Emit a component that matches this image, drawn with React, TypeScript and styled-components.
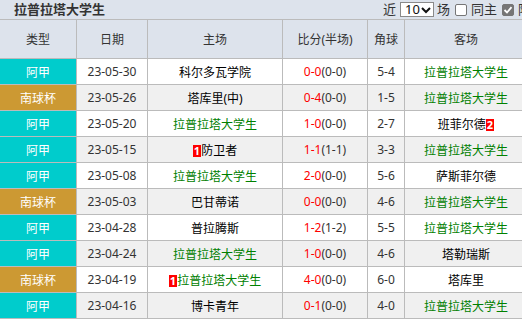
import React from "react";
import styled, { createGlobalStyle } from "styled-components";

const Global = createGlobalStyle`
  html, body { margin: 0; padding: 0; background: #ffffff; overflow: hidden; }
  body { font-family: "Noto Sans", "Noto Sans CJK SC", sans-serif; font-size: 12px; color: #333; }
`;

const Page = styled.div`
  width: 522px;
  height: 319px;
  overflow: hidden;
  background: #dde3ec;
`;

const TitleBar = styled.div`
  display: flex;
  align-items: center;
  height: 19px;
  background: #dde3ec;
  white-space: nowrap;
`;

const Title = styled.div`
  flex: 1 1 auto;
  min-width: 0;
  padding-left: 14px;
  font-size: 13px;
  font-weight: bold;
  color: #333;
  line-height: 19px;
`;

const Controls = styled.div`
  flex: 0 0 139px;
  display: flex;
  align-items: center;
  gap: 3px;
  overflow: hidden;
  font-size: 13px;
  color: #333;
  line-height: 19px;
`;

const Select = styled.div`
  flex: 0 0 auto;
  display: flex;
  align-items: center;
  justify-content: space-between;
  box-sizing: border-box;
  width: 34px;
  height: 15px;
  padding: 0 2px 0 4px;
  margin-left: 1px;
  background: #fff;
  border: 1px solid #8a8a8a;
  font-size: 13px;
  color: #111;
  line-height: 13px;
`;

const Check = styled.span<{ $on?: boolean }>`
  flex: 0 0 auto;
  display: inline-flex;
  align-items: center;
  justify-content: center;
  box-sizing: border-box;
  width: 12px;
  height: 12px;
  border-radius: 2px;
  border: 1px solid ${(p) => (p.$on ? "#767676" : "#767676")};
  background: ${(p) => (p.$on ? "#767676" : "#fff")};
  margin: 0 1px 0 2px;
`;

const Table = styled.table`
  width: 522px;
  border-collapse: collapse;
  table-layout: fixed;
  font-size: 12px;
`;

const Th = styled.th<{ $w: number }>`
  width: ${(p) => p.$w}px;
  height: 38px;
  padding: 0;
  border: 1px solid #bbbbbb;
  background: #dde3ec;
  color: #333;
  font-weight: normal;
  text-align: center;
  white-space: nowrap;
  &:first-child { border-left: none; }
  &:last-child { border-right: none; }
`;

const Tr = styled.tr<{ $alt: boolean }>`
  background: ${(p) => (p.$alt ? "#f0f0f0" : "#ffffff")};
`;

const Td = styled.td<{ $color?: string }>`
  height: 25px;
  padding: 0;
  border: 1px solid #bbbbbb;
  text-align: center;
  white-space: nowrap;
  color: ${(p) => p.$color || "#333"};
  &:first-child { border-left: none; }
  &:last-child { border-right: none; }
`;

const TypeTd = styled(Td)<{ $kind: "league" | "cup" }>`
  background: ${(p) => (p.$kind === "cup" ? "#cc9933" : "#00cccc")};
  color: #fff;
`;

const Red = styled.span`
  color: #ff0000;
`;

const Badge = styled.span`
  display: inline-block;
  min-width: 7px;
  height: 12px;
  padding: 0 1px;
  box-sizing: border-box;
  background: #ff0000;
  color: #fff;
  font-weight: bold;
  font-size: 11px;
  line-height: 12px;
  text-align: center;
  vertical-align: 0px;
`;

const Team = styled.span<{ $green: boolean }>`
  color: ${(p) => (p.$green ? "#008000" : "#000")};
`;

type Row = {
  type: "阿甲" | "南球杯";
  date: string;
  home: string;
  homeBadge?: string;
  full: string;
  half: string;
  corner: string;
  away: string;
  awayBadge?: string;
};

const ME = "拉普拉塔大学生";

const rows: Row[] = [
  { type: "阿甲", date: "23-05-30", home: "科尔多瓦学院", full: "0-0", half: "(0-0)", corner: "5-4", away: ME },
  { type: "南球杯", date: "23-05-26", home: "塔库里(中)", full: "0-4", half: "(0-0)", corner: "1-5", away: ME },
  { type: "阿甲", date: "23-05-20", home: ME, full: "1-0", half: "(0-0)", corner: "2-7", away: "班菲尔德", awayBadge: "2" },
  { type: "阿甲", date: "23-05-15", home: "防卫者", homeBadge: "1", full: "1-1", half: "(1-1)", corner: "3-3", away: ME },
  { type: "阿甲", date: "23-05-08", home: ME, full: "2-0", half: "(0-0)", corner: "5-6", away: "萨斯菲尔德" },
  { type: "南球杯", date: "23-05-03", home: "巴甘蒂诺", full: "0-0", half: "(0-0)", corner: "4-6", away: ME },
  { type: "阿甲", date: "23-04-28", home: "普拉腾斯", full: "1-2", half: "(1-2)", corner: "5-5", away: ME },
  { type: "阿甲", date: "23-04-24", home: ME, full: "1-0", half: "(0-0)", corner: "4-6", away: "塔勒瑞斯" },
  { type: "南球杯", date: "23-04-19", home: ME, homeBadge: "1", full: "4-0", half: "(0-0)", corner: "6-0", away: "塔库里" },
  { type: "阿甲", date: "23-04-16", home: "博卡青年", full: "0-1", half: "(0-0)", corner: "4-0", away: ME },
];

const cols: [string, number][] = [
  ["类型", 76],
  ["日期", 70],
  ["主场", 134],
  ["比分(半场)", 84],
  ["角球", 36],
  ["客场", 122],
];

export default function App() {
  return (
    <>
      <Global />
      <Page>
        <TitleBar>
          <Title>拉普拉塔大学生</Title>
          <Controls>
            <span>近</span>
            <Select>
              <span>10</span>
              <svg width="10" height="8" viewBox="0 0 10 8">
                <path d="M1 2 L5 6 L9 2" fill="none" stroke="#111" strokeWidth="2" />
              </svg>
            </Select>
            <span>场</span>
            <Check />
            <span>同主</span>
            <Check $on>
              <svg width="10" height="10" viewBox="0 0 10 10">
                <path d="M1.5 5 L4 7.5 L8.5 2.2" fill="none" stroke="#fff" strokeWidth="1.8" />
              </svg>
            </Check>
            <span>阿甲</span>
          </Controls>
        </TitleBar>
        <Table>
          <thead>
            <tr>
              {cols.map(([t, w]) => (
                <Th key={t} $w={w}>
                  {t}
                </Th>
              ))}
            </tr>
          </thead>
          <tbody>
            {rows.map((r, i) => (
              <Tr key={r.date} $alt={i % 2 === 1}>
                <TypeTd $kind={r.type === "南球杯" ? "cup" : "league"}>{r.type}</TypeTd>
                <Td>{r.date}</Td>
                <Td>
                  {r.homeBadge && <Badge>{r.homeBadge}</Badge>}
                  <Team $green={r.home === ME}>{r.home}</Team>
                </Td>
                <Td>
                  <Red>{r.full}</Red>
                  {r.half}
                </Td>
                <Td>{r.corner}</Td>
                <Td>
                  <Team $green={r.away === ME}>{r.away}</Team>
                  {r.awayBadge && <Badge>{r.awayBadge}</Badge>}
                </Td>
              </Tr>
            ))}
          </tbody>
        </Table>
      </Page>
    </>
  );
}
